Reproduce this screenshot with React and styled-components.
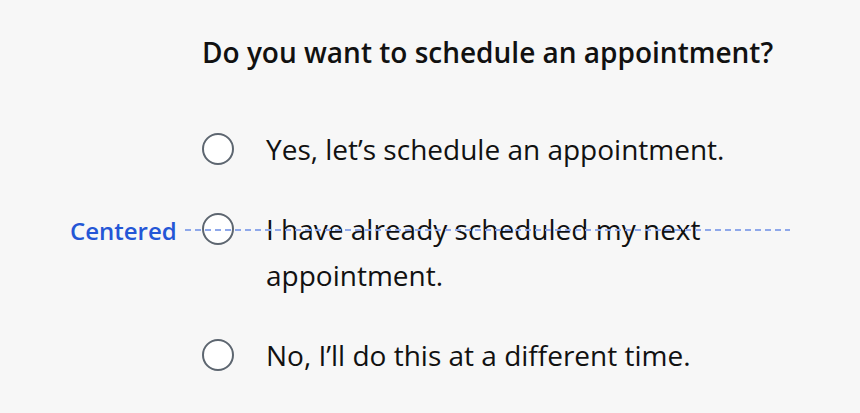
import React from "react";
import styled, { createGlobalStyle } from "styled-components";

const Global = createGlobalStyle`
  html, body { margin: 0; padding: 0; background: #f7f7f7; }
  body { font-family: "Open Sans", "Noto Sans", sans-serif; color: #111; }
`;

const Page = styled.div`
  position: relative;
  width: 860px;
  height: 413px;
  box-sizing: border-box;
  padding: 34px 0 0 202px;
  background: #f7f7f7;
`;

const Heading = styled.h1`
  margin: 0 0 56px;
  font-size: 28px;
  line-height: 36px;
  font-weight: 600;
  color: #111;
`;

const List = styled.div`
  display: flex;
  flex-direction: column;
  gap: 34px;
`;

const Option = styled.label`
  display: flex;
  align-items: flex-start;
  gap: 32px;
`;

const RadioSlot = styled.span`
  flex: none;
  height: 46px;
  display: flex;
  align-items: center;
`;

const Radio = styled.span`
  width: 28px;
  height: 28px;
  border: 2px solid #5d6670;
  border-radius: 50%;
  background: #fff;
`;

const OptionText = styled.span`
  font-size: 28px;
  line-height: 46px;
  width: 480px;
  color: #111;
`;

const Guide = styled.div`
  position: absolute;
  left: 70px;
  top: 215px;
  width: 720px;
  height: 30px;
  display: flex;
  align-items: center;
  gap: 8px;
`;

const GuideLabel = styled.span`
  font-size: 24px;
  font-weight: 600;
  color: #2456d6;
`;

const GuideLine = styled.span`
  flex: 1;
  height: 2px;
  background: repeating-linear-gradient(
    to right,
    #8ea8ea 0 6px,
    transparent 6px 10px
  );
`;

const options = [
  "Yes, let\u2019s schedule an appointment.",
  "I have already scheduled my next appointment.",
  "No, I\u2019ll do this at a different time.",
];

export default function App() {
  return (
    <Page>
      <Global />
      <Heading>Do you want to schedule an appointment?</Heading>
      <List>
        {options.map((o) => (
          <Option key={o}>
            <RadioSlot>
              <Radio />
            </RadioSlot>
            <OptionText>{o}</OptionText>
          </Option>
        ))}
      </List>
      <Guide>
        <GuideLabel>Centered</GuideLabel>
        <GuideLine />
      </Guide>
    </Page>
  );
}
